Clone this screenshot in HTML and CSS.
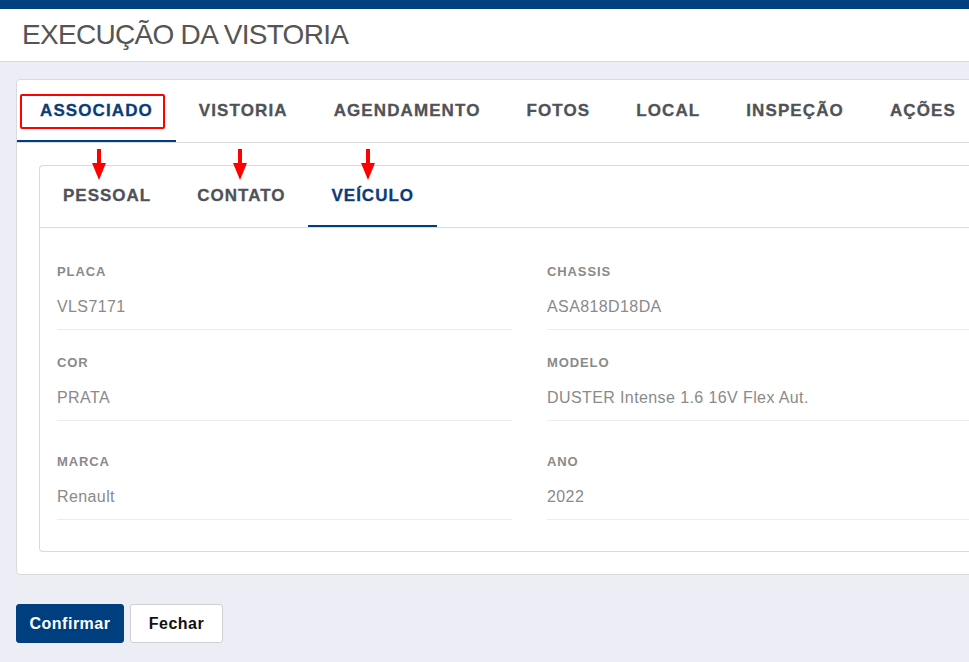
FILE: index.html
```html
<!DOCTYPE html>
<html lang="pt-BR">
<head>
    <meta charset="UTF-8">
    <meta name="viewport" content="width=device-width, initial-scale=1.0">
    <title>Execução da Vistoria</title>
    <link rel="stylesheet" href="styles.css">
</head>
<body>
    <div class="topbar"></div>
    <header class="page-header">
        <h1>EXECUÇÃO DA VISTORIA</h1>
    </header>

    <main class="content">
        <section class="card">
            <nav class="tabs">
                <div class="tab active">ASSOCIADO</div>
                <div class="tab">VISTORIA</div>
                <div class="tab">AGENDAMENTO</div>
                <div class="tab">FOTOS</div>
                <div class="tab">LOCAL</div>
                <div class="tab">INSPEÇÃO</div>
                <div class="tab">AÇÕES</div>
            </nav>

            <!-- marcações em vermelho -->
            <div class="highlight"></div>
            <svg class="arrow arrow-1" width="14" height="32" viewBox="0 0 14 32"><rect x="5" y="0" width="4" height="15" fill="#f00"/><polygon points="0,14 14,14 7,31" fill="#f00"/></svg>
            <svg class="arrow arrow-2" width="14" height="32" viewBox="0 0 14 32"><rect x="5" y="0" width="4" height="15" fill="#f00"/><polygon points="0,14 14,14 7,31" fill="#f00"/></svg>
            <svg class="arrow arrow-3" width="14" height="32" viewBox="0 0 14 32"><rect x="5" y="0" width="4" height="15" fill="#f00"/><polygon points="0,14 14,14 7,31" fill="#f00"/></svg>

            <div class="inner-card">
                <nav class="tabs sub-tabs">
                    <div class="tab">PESSOAL</div>
                    <div class="tab">CONTATO</div>
                    <div class="tab active">VEÍCULO</div>
                </nav>

                <div class="fields">
                    <div class="field">
                        <div class="label">PLACA</div>
                        <div class="value">VLS7171</div>
                    </div>
                    <div class="field">
                        <div class="label">CHASSIS</div>
                        <div class="value">ASA818D18DA</div>
                    </div>
                    <div class="field">
                        <div class="label">COR</div>
                        <div class="value">PRATA</div>
                    </div>
                    <div class="field">
                        <div class="label">MODELO</div>
                        <div class="value">DUSTER Intense 1.6 16V Flex Aut.</div>
                    </div>
                    <div class="field last-row">
                        <div class="label">MARCA</div>
                        <div class="value">Renault</div>
                    </div>
                    <div class="field last-row">
                        <div class="label">ANO</div>
                        <div class="value">2022</div>
                    </div>
                </div>
            </div>
        </section>

        <div class="actions">
            <button class="btn btn-primary">Confirmar</button>
            <button class="btn btn-default">Fechar</button>
        </div>
    </main>
</body>
</html>
```

FILE: styles.css
```css
* {
    box-sizing: border-box;
}

body {
    margin: 0;
    font-family: "Liberation Sans", Arial, sans-serif;
    background-color: #ededf6;
    overflow: hidden;
    height: 100vh;
}

.topbar {
    height: 9px;
    background-color: #004080;
}

.page-header {
    background-color: #fff;
    height: 53px;
    border-bottom: 1px solid #d9d9de;
    padding-left: 22px;
    display: flex;
    align-items: center;
}

.page-header h1 {
    margin: 0;
    font-size: 28px;
    font-weight: normal;
    color: #555;
    letter-spacing: -0.7px;
}

.content {
    padding: 17px 0 0 16px;
}

.card {
    position: relative;
    width: 1040px;
    background-color: #fff;
    border: 1px solid #dadada;
    border-radius: 4px;
    padding-bottom: 22px;
}

.tabs {
    display: flex;
    border-bottom: 1px solid #dcdcdc;
}

.tab {
    padding: 21px 23px 19px;
    font-size: 17px;
    line-height: 20px;
    font-weight: bold;
    letter-spacing: 1.1px;
    color: #4f5257;
    -webkit-text-stroke: 0.3px;
    border-bottom: 2px solid transparent;
}

.tab.active {
    color: #0b3c78;
    border-bottom-color: #003f7f;
}

.inner-card {
    margin: 22px 0 0 22px;
    border: 1px solid #dadada;
    border-radius: 4px;
    border-right: none;
}

.sub-tabs .tab {
    padding: 20px 23px 19px;
    letter-spacing: 1px;
}

.fields {
    display: grid;
    grid-template-columns: 455px 455px;
    column-gap: 35px;
    padding: 36px 17px 31px;
}

.field {
    padding-bottom: 13px;
    border-bottom: 1px solid #ededed;
    margin-bottom: 25px;
}

.field.last-row {
    margin-top: 8px;
    margin-bottom: 0;
}

.label {
    font-size: 13px;
    line-height: 16px;
    font-weight: bold;
    letter-spacing: 0.9px;
    color: #8a8a8a;
    margin-bottom: 18px;
}

.value {
    font-size: 16px;
    line-height: 18px;
    letter-spacing: 0.4px;
    color: #8a8a8a;
}

.highlight {
    position: absolute;
    left: 3px;
    top: 14px;
    width: 145px;
    height: 35px;
    border: 2px solid #f00;
    border-radius: 2px;
}

.arrow {
    position: absolute;
    top: 69px;
}

.arrow-1 { left: 75px; }
.arrow-2 { left: 216px; }
.arrow-3 { left: 344px; }

.actions {
    display: flex;
    gap: 6px;
    margin-top: 29px;
}

.btn {
    height: 39px;
    padding: 0 12px;
    font-family: "Liberation Sans", Arial, sans-serif;
    font-size: 16px;
    font-weight: bold;
    letter-spacing: 0.5px;
    border-radius: 3px;
    cursor: pointer;
}

.btn-primary {
    background-color: #003f7f;
    border: 1px solid #003f7f;
    color: #fff;
    width: 108px;
}

.btn-default {
    background-color: #fff;
    border: 1px solid #cfcfd4;
    color: #111;
    width: 93px;
}
```
